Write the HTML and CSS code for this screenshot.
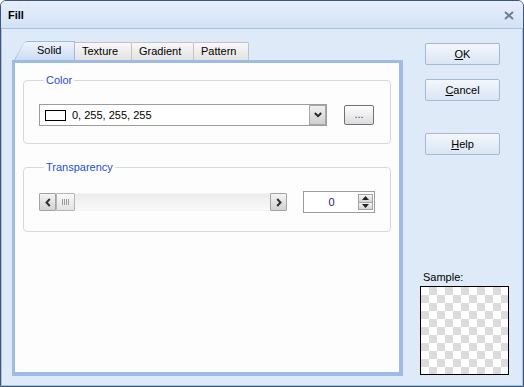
FILE: index.html
```html
<!DOCTYPE html>
<html>
<head>
<meta charset="utf-8">
<link rel="stylesheet" href="styles.css">
</head>
<body>
<div class="window">
  <div class="titlebar">
    <span class="title">Fill</span>
    <svg class="close" width="10" height="9" viewBox="0 0 10 9"><path d="M1 1L9 8M9 1L1 8" stroke="#6f7e95" stroke-width="2"/></svg>
  </div>
  <div class="body">
    <div class="left">
      <div class="tabs">
        <div class="tab-sel"><div class="tab-sel-in">Solid</div></div>
        <div class="tab w-texture">Texture</div>
        <div class="tab w-gradient">Gradient</div>
        <div class="tab w-pattern">Pattern</div>
      </div>
      <div class="panel">
        <fieldset class="group group-color">
          <legend>Color</legend>
          <div class="row">
            <div class="combo">
              <span class="swatch"></span>
              <span class="combo-text">0, 255, 255, 255</span>
              <span class="combo-btn"><svg width="8" height="6" viewBox="0 0 8 6"><path d="M0.8 1 L4 4.2 L7.2 1" stroke="#2a2a2a" stroke-width="2" fill="none"/></svg></span>
            </div>
            <div class="dots">...</div>
          </div>
        </fieldset>
        <fieldset class="group group-trans">
          <legend>Transparency</legend>
          <div class="row row-trans">
            <div class="scroll">
              <span class="sbtn"><svg width="6" height="9" viewBox="0 0 6 9"><path d="M4.8 1 L1.5 4.5 L4.8 8" stroke="#333" stroke-width="2" fill="none"/></svg></span>
              <span class="thumb"><span class="grip"></span></span>
              <span class="track"></span>
              <span class="sbtn"><svg width="6" height="9" viewBox="0 0 6 9"><path d="M1.2 1 L4.5 4.5 L1.2 8" stroke="#333" stroke-width="2" fill="none"/></svg></span>
            </div>
            <div class="spin">
              <span class="spin-val">0</span>
              <span class="spin-btns">
                <span class="spin-b"><svg width="7" height="4" viewBox="0 0 7 4"><path d="M0 4 L3.5 0 L7 4Z" fill="#222"/></svg></span>
                <span class="spin-b"><svg width="7" height="4" viewBox="0 0 7 4"><path d="M0 0 L3.5 4 L7 0Z" fill="#222"/></svg></span>
              </span>
            </div>
          </div>
        </fieldset>
      </div>
    </div>
    <div class="right">
      <div class="btn"><u>O</u>K</div>
      <div class="btn btn-cancel"><u>C</u>ancel</div>
      <div class="btn btn-help"><u>H</u>elp</div>
      <div class="sample">
        <div class="sample-label">Sample:</div>
        <div class="sample-box"></div>
      </div>
    </div>
  </div>
</div>
</body>
</html>
```
FILE: styles.css
```css
* { box-sizing: border-box; }
html, body { margin: 0; padding: 0; background: #ffffff; }
body { font-family: "Liberation Sans", Arial, sans-serif; font-size: 11px; color: #000; }

.window {
  width: 524px; height: 387px;
  border: 1px solid #3d5678;
  border-radius: 6px 6px 0 0;
  background: #dfe9f8;
  display: flex; flex-direction: column;
  overflow: hidden;
}
.titlebar {
  height: 28px; flex: none;
  background: linear-gradient(#e6eefa, #d4e2f6);
  border-bottom: 1px solid #a9c2e4;
  display: flex; align-items: center; justify-content: space-between;
  padding: 0 9px 0 7px;
}
.title { font-weight: bold; font-size: 11px; padding-top: 1px; }
.close { margin-top: 1px; }

.body {
  flex: 1;
  display: flex;
  border: 1px solid #aac1e3; border-top: none;
  padding: 12px 0 0 10px;
  background: #dfeaf9;
}
.left { width: 391px; flex: none; display: flex; flex-direction: column; }
.tabs { display: flex; align-items: flex-end; height: 19px; padding-left: 2px; }
.tab-sel {
  width: 61px; height: 19px; margin-left: 0;
  background: #9dbbe5;
  clip-path: polygon(0 100%, 10px 2px, 13px 0, 100% 0, 100% 100%);
  padding: 1px 1px 0 1px;
}
.tab-sel-in {
  height: 100%;
  background: linear-gradient(#eef4fc, #cadcf4);
  clip-path: polygon(0 100%, 9px 1px, 12px 0, 100% 0, 100% 100%);
  padding-left: 22px; line-height: 17px;
}
.tab {
  height: 18px; line-height: 17px;
  border: 1px solid #c2c2c2; border-left: none; border-bottom: none;
  border-radius: 0 2px 0 0;
  background: linear-gradient(#f8f8f8, #e3e3e3);
  padding-left: 7px;
}
.w-texture { width: 57px; }
.w-gradient { width: 62px; }
.w-pattern { width: 55px; }

.panel {
  height: 316px;
  border-style: solid; border-color: #9dbbe5;
  border-width: 3px 4px 4px 3px;
  background: #fdfdfd;
  padding: 11px 8px 0 8px;
}
.group {
  margin: 0; min-width: 0;
  border: 1px solid #d6d9dc; border-radius: 4px;
  padding: 17px 15px 17px 15px;
}
.group legend {
  margin-left: 5px; padding: 0 2px;
  line-height: 13px; color: #1f4fd4;
}
.group-trans { margin-top: 17px; padding-bottom: 18px; }

.row { display: flex; align-items: center; }
.combo {
  width: 288px; height: 22px;
  border: 1px solid #9c9c9c; background: #fff;
  display: flex; align-items: center;
  padding-left: 5px;
}
.swatch { width: 21px; height: 11px; border: 1px solid #000; background: #fff; flex: none; }
.combo-text { margin-left: 6px; flex: 1; }
.combo-btn {
  width: 17px; height: 20px; flex: none;
  border: 1px solid #a8a8a8;
  background: linear-gradient(#f0f0f0, #cfcfcf);
  display: flex; align-items: center; justify-content: center;
}
.dots {
  margin-left: 17px; width: 30px; height: 20px;
  border: 1px solid #707070; border-radius: 2px;
  background: linear-gradient(#ffffff, #dcdcdc);
  text-align: center; line-height: 16px; color: #4a2a7a;
}

.row-trans { height: 22px; }
.scroll {
  width: 249px; height: 18px;
  display: flex;
}
.sbtn {
  width: 17px; height: 18px; flex: none;
  border: 1px solid #a3a3a3; border-radius: 1px;
  background: linear-gradient(#f4f4f4, #d2d2d2);
  display: flex; align-items: center; justify-content: center;
}
.thumb {
  width: 19px; height: 18px; flex: none;
  border: 1px solid #b5b5b5; border-radius: 1px;
  background: linear-gradient(#fafafa, #e2e2e2);
  display: flex; align-items: center; justify-content: center;
}
.grip {
  width: 7px; height: 6px;
  background: repeating-linear-gradient(90deg, #9a9a9a 0 1px, transparent 1px 2px);
}
.track {
  flex: 1; height: 18px;
  background: linear-gradient(#ececec, #f9f9f9);
  border-top: 1px solid #f2f2f2; border-bottom: 1px solid #f4f4f4;
}
.spin {
  margin-left: 16px; width: 72px; height: 22px;
  border: 1px solid #9c9c9c; background: #fff;
  display: flex; align-items: center;
}
.spin-val { flex: 1; text-align: center; padding-left: 1px; color: #3a1070; }
.spin-btns { width: 15px; height: 16px; display: flex; flex-direction: column; margin-right: 1px; }
.spin-b {
  flex: 1; border: 1px solid #a3a3a3;
  background: linear-gradient(#f4f4f4, #d4d4d4);
  display: flex; align-items: center; justify-content: center;
}
.spin-b + .spin-b { border-top: none; }

.right {
  width: 89px; flex: none; margin-left: 17px;
  display: flex; flex-direction: column;
  padding-top: 2px; padding-bottom: 10px;
}
.btn {
  margin-left: 5px; width: 75px; height: 22px;
  border: 1px solid #a5b9d6; border-radius: 2px;
  background: linear-gradient(#f4f7fc, #dae5f5);
  text-align: center; line-height: 20px;
}
.btn u { text-decoration-thickness: 1px; text-underline-offset: 1px; }
.btn-cancel { margin-top: 14px; }
.btn-help { margin-top: 32px; }
.sample { margin-top: auto; }
.sample-label { padding-left: 3px; line-height: 13px; margin-bottom: 2px; }
.sample-box {
  width: 89px; height: 89px;
  border: 1px solid #000;
  background-color: #fff;
  background-image: conic-gradient(#dcdcdc 25%, #ffffff 0 50%, #dcdcdc 0 75%, #ffffff 0);
  background-size: 16px 16px;
  background-position: 0 0;
}
```
